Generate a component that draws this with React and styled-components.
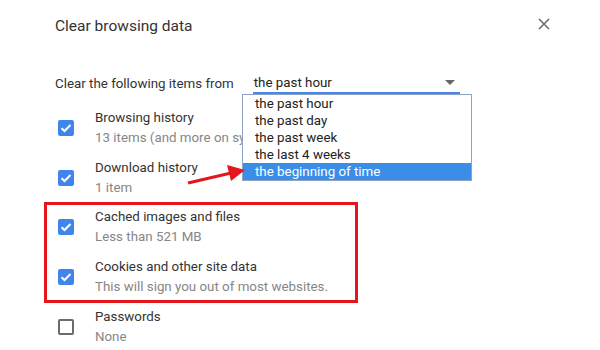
import React from "react";
import styled, { createGlobalStyle } from "styled-components";

const Global = createGlobalStyle`
  html, body { margin: 0; padding: 0; background: #fff; }
  body { font-family: Roboto, "Liberation Sans", Arial, sans-serif; }
`;

const Dialog = styled.div`
  position: relative;
  width: 600px;
  height: 350px;
  overflow: hidden;
  background: #fff;
  box-sizing: border-box;
  padding: 13px 0 0 55px;
`;

const Header = styled.div`
  display: flex;
  align-items: center;
  justify-content: space-between;
  height: 24px;
  padding-right: 50px;
`;

const Title = styled.h1`
  margin: 0;
  padding-top: 2px;
  font-size: 15.5px;
  font-weight: 400;
  color: #333;
`;

const CloseButton = styled.button`
  display: flex;
  border: 0;
  padding: 0;
  margin-top: -2px;
  background: none;
  width: 12px;
  height: 12px;
`;

const SelectRow = styled.div`
  display: flex;
  align-items: center;
  margin-top: 35px;
  height: 22px;
  font-size: 13.33px;
  color: #333;
`;

const SelectBox = styled.div`
  margin-left: 19px;
  width: 207px;
  height: 22px;
  box-sizing: border-box;
  display: flex;
  align-items: center;
  justify-content: space-between;
  padding: 0 5px 0 1px;
  border-bottom: 2px solid #4a86e8;
  color: #222;
`;

const Caret = styled.span`
  width: 0;
  height: 0;
  border-left: 5px solid transparent;
  border-right: 5px solid transparent;
  border-top: 5px solid #666;
`;

const List = styled.div`
  margin-top: 9.15px;
  padding-left: 3px;
`;

const Row = styled.div`
  display: flex;
  align-items: center;
  height: 49.7px;
`;

const Highlight = styled.div`
  width: 312px;
  margin-left: -13px;
  padding-left: 13px;
  box-sizing: border-box;
  outline: 3px solid #e4151b;
  outline-offset: -2px;
`;

const Box = styled.span`
  flex: none;
  width: 16px;
  height: 16px;
  box-sizing: border-box;
  border-radius: 2px;
  display: flex;
  align-items: center;
  justify-content: center;
  background: ${(p) => (p.$checked ? "#4085ec" : "transparent")};
  border: ${(p) => (p.$checked ? "none" : "2px solid #6b6b6b")};
`;

const Texts = styled.div`
  margin-left: 21px;
  display: flex;
  flex-direction: column;
  font-size: 13.33px;
  white-space: nowrap;
`;

const Label = styled.div`
  line-height: 20px;
  color: #333;
`;

const Sub = styled.div`
  line-height: 20px;
  color: #868686;
`;

const Dropdown = styled.ul`
  position: absolute;
  left: 242px;
  top: 94px;
  width: 230px;
  margin: 0;
  padding: 0;
  box-sizing: border-box;
  list-style: none;
  background: #fff;
  border: 1px solid #8ea3c8;
  font-size: 13.33px;
`;

const Option = styled.li`
  height: 17px;
  line-height: 17px;
  padding-left: 12px;
  color: ${(p) => (p.$active ? "#fff" : "#222")};
  background: ${(p) => (p.$active ? "#3a8ee8" : "transparent")};
`;

const Arrow = styled.svg`
  position: absolute;
  left: 185px;
  top: 160px;
`;

const Check = () => (
  <svg width="12" height="10" viewBox="0 0 12 10">
    <path d="M1.5 5.2 L4.5 8 L10.5 2" fill="none" stroke="#fff" strokeWidth="2" />
  </svg>
);

const Item = ({ checked, label, sub }) => (
  <Row>
    <Box $checked={checked}>{checked && <Check />}</Box>
    <Texts>
      <Label>{label}</Label>
      <Sub>{sub}</Sub>
    </Texts>
  </Row>
);

export default function App() {
  const options = [
    "the past hour",
    "the past day",
    "the past week",
    "the last 4 weeks",
    "the beginning of time",
  ];
  return (
    <>
      <Global />
      <Dialog>
        <Header>
          <Title>Clear browsing data</Title>
          <CloseButton aria-label="close">
            <svg width="12" height="12" viewBox="0 0 12 12">
              <path d="M1 1 L11 11 M11 1 L1 11" stroke="#6e6e6e" strokeWidth="1.6" />
            </svg>
          </CloseButton>
        </Header>
        <SelectRow>
          <span>Clear the following items from</span>
          <SelectBox>
            <span>the past hour</span>
            <Caret />
          </SelectBox>
        </SelectRow>
        <List>
          <Item checked label="Browsing history" sub="13 items (and more on synced devices)" />
          <Item checked label="Download history" sub="1 item" />
          <Highlight>
            <Item checked label="Cached images and files" sub="Less than 521 MB" />
            <Item checked label="Cookies and other site data" sub="This will sign you out of most websites." />
          </Highlight>
          <Item checked={false} label="Passwords" sub="None" />
        </List>
        <Dropdown>
          {options.map((o, i) => (
            <Option key={o} $active={i === options.length - 1}>
              {o}
            </Option>
          ))}
        </Dropdown>
        <Arrow width="64" height="30" viewBox="0 0 64 30">
          <line x1="3" y1="23" x2="46" y2="13" stroke="#e4151b" strokeWidth="3" />
          <polygon points="60,10 42,5 46,21" fill="#e4151b" />
        </Arrow>
      </Dialog>
    </>
  );
}
